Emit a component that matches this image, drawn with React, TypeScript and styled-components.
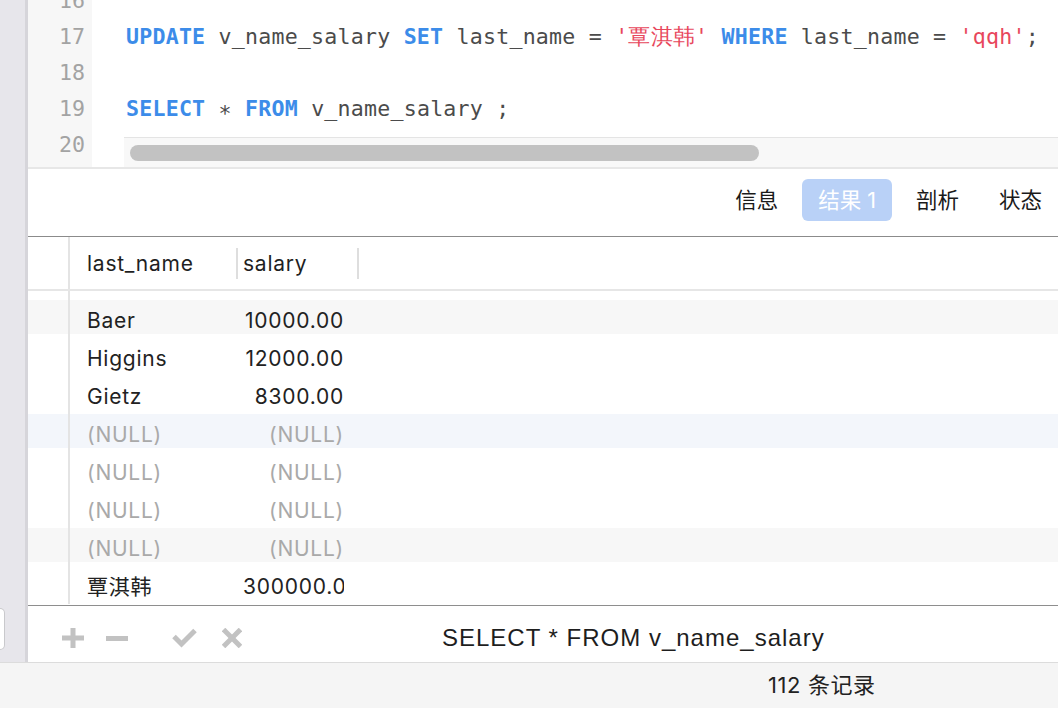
import React from "react";
import styled, { createGlobalStyle } from "styled-components";

const Global = createGlobalStyle`
  html, body { margin: 0; padding: 0; background: #fff; overflow: hidden; }
  #root { width: 1058px; height: 708px; }
`;

const Shell = styled.div`
  width: 1058px;
  height: 708px;
  display: flex;
  flex-direction: column;
  overflow: hidden;
  font-family: Inter, "Noto Sans CJK SC", sans-serif;
  color: #1e1e1e;
`;

const Main = styled.div`
  display: flex;
  height: 663px;
  box-sizing: border-box;
  border-bottom: 1px solid #dcdcdc;
`;

const Sidebar = styled.div`
  width: 25px;
  flex: none;
  background: #e7e6eb;
  border-right: 3px solid #d6d5da;
  display: flex;
  flex-direction: column;
  justify-content: flex-end;
  padding-bottom: 12px;
  box-sizing: content-box;
`;

const SideHandle = styled.div`
  width: 4px;
  height: 40px;
  background: #fff;
  border: 1px solid #c9c9cc;
  border-left: none;
  border-radius: 0 6px 6px 0;
`;

const Content = styled.div`
  flex: 1;
  display: flex;
  flex-direction: column;
  min-width: 0;
`;

const Editor = styled.div`
  height: 167px;
  flex: none;
  display: flex;
  position: relative;
  overflow: hidden;
  border-bottom: 2px solid #e7e7e7;
  font-family: "DejaVu Sans Mono", monospace;
  font-size: 21.6px;
`;

const Gutter = styled.div`
  width: 64px;
  flex: none;
  background: #f7f7f7;
  color: #a3a3a3;
  text-align: right;
  padding-right: 7px;
  box-sizing: border-box;
`;

const Lines = styled.div`
  margin-top: -17px;
`;

const Line = styled.div`
  height: 36px;
  line-height: 36px;
  white-space: pre;
`;

const CodeArea = styled.div`
  flex: 1;
  padding-left: 34px;
  color: #4b4b4b;
  letter-spacing: 0.22px;
`;

const Kw = styled.span`
  color: #3c8ce9;
  font-weight: bold;
`;

const Str = styled.span`
  color: #e8475c;
`;

const Star = styled.span`
  display: inline-block;
  transform: translateY(5px);
`;

const ScrollTrack = styled.div`
  position: absolute;
  left: 96px;
  right: 0;
  bottom: 0;
  height: 30px;
  box-sizing: border-box;
  background: #f8f8f8;
  border-top: 1px solid #e4e4e4;
  padding: 7px 0 0 6px;
`;

const ScrollThumb = styled.div`
  width: 629px;
  height: 16px;
  border-radius: 8px;
  background: #c2c2c2;
`;

const TabBar = styled.div`
  height: 68px;
  flex: none;
  box-sizing: border-box;
  border-bottom: 1px solid #8b8b8b;
  display: flex;
  justify-content: flex-end;
  align-items: flex-start;
  gap: 8px;
  padding-top: 10px;
`;

const Tab = styled.div<{ $active?: boolean }>`
  height: 42px;
  line-height: 42px;
  padding: 0 16px;
  border-radius: 6px;
  font-size: 21.5px;
  background: ${(p) => (p.$active ? "#b9d1f7" : "transparent")};
  color: ${(p) => (p.$active ? "#ffffff" : "#1a1a1a")};
`;

const Table = styled.div`
  flex: 1;
  display: flex;
  flex-direction: column;
  border-bottom: 1px solid #8e8e8e;
  overflow: hidden;
  font-size: 21px;
  letter-spacing: 0.75px;
`;

const HeaderRow = styled.div`
  height: 54px;
  flex: none;
  display: flex;
  align-items: stretch;
  box-sizing: border-box;
  border-bottom: 2px solid #e6e6e6;
`;

const NumCell = styled.div`
  width: 40px;
  flex: none;
  border-right: 2px solid #e4e4e4;
`;

const HeadCell = styled.div<{ $w: number; $pl: number }>`
  width: ${(p) => p.$w}px;
  padding-left: ${(p) => p.$pl}px;
  box-sizing: border-box;
  display: flex;
  align-items: center;
  color: #1f1f1f;
`;

const ColDivider = styled.div`
  width: 2px;
  height: 31px;
  align-self: center;
  background: #dedede;
`;

const Spacer = styled.div`
  height: 9px;
  flex: none;
  display: flex;
`;

const Row = styled.div<{ $bg?: string }>`
  height: 38px;
  flex: none;
  display: flex;
  background: ${(p) =>
    p.$bg ? `linear-gradient(to bottom, ${p.$bg} 0 34px, transparent 34px)` : "transparent"};
`;

const NameCell = styled.div<{ $null?: boolean }>`
  width: 166px;
  padding: 4px 0 0 17px;
  box-sizing: border-box;
  line-height: 34px;
  white-space: nowrap;
  color: ${(p) => (p.$null ? "#a9a9a9" : "#222")};
`;

const SalaryCell = styled.div<{ $null?: boolean }>`
  width: 101px;
  margin-left: 7px;
  padding-top: 4px;
  line-height: 34px;
  text-align: right;
  white-space: nowrap;
  overflow: hidden;
  color: ${(p) => (p.$null ? "#a9a9a9" : "#222")};
`;

const Toolbar = styled.div`
  height: 56px;
  flex: none;
  display: flex;
  align-items: center;
  padding: 7px 0 0 34px;
  box-sizing: border-box;
`;

const IconSlot = styled.div<{ $ml: number }>`
  margin-left: ${(p) => p.$ml}px;
  display: flex;
  align-items: center;
  color: #c2c2c2;
`;

const SqlText = styled.div`
  margin-left: 200px;
  font-family: "Liberation Sans", Arial, sans-serif;
  font-size: 24px;
  letter-spacing: 1px;
  color: #1e1e1e;
  white-space: nowrap;
`;

const StatusBar = styled.div`
  height: 45px;
  flex: none;
  background: #f5f5f5;
  padding-left: 768px;
  line-height: 45px;
  font-size: 22px;
  letter-spacing: 0.6px;
  color: #222;
`;

type DataRow = { name: string; salary: string; bg?: string };

const rows: DataRow[] = [
  { name: "Baer", salary: "10000.00", bg: "#f7f7f7" },
  { name: "Higgins", salary: "12000.00" },
  { name: "Gietz", salary: "8300.00" },
  { name: "(NULL)", salary: "(NULL)", bg: "#f3f6fb" },
  { name: "(NULL)", salary: "(NULL)" },
  { name: "(NULL)", salary: "(NULL)" },
  { name: "(NULL)", salary: "(NULL)", bg: "#f7f7f7" },
  { name: "覃淇韩", salary: "300000.00" },
];

const PlusIcon = () => (
  <svg width="22" height="20" viewBox="0 0 22 20" fill="currentColor">
    <path d="M8.5 0h5v7.5h8.5v5h-8.5v7.5h-5v-7.5H0v-5h8.5z" />
  </svg>
);

const MinusIcon = () => (
  <svg width="22" height="20" viewBox="0 0 22 20" fill="currentColor">
    <rect x="0" y="8" width="22" height="5" />
  </svg>
);

const CheckIcon = () => (
  <svg width="25" height="20" viewBox="0 0 25 20" fill="none" stroke="currentColor" strokeWidth="5">
    <polyline points="2,8.5 9.5,16 23,2.5" />
  </svg>
);

const CrossIcon = () => (
  <svg width="20" height="20" viewBox="0 0 20 20" fill="none" stroke="currentColor" strokeWidth="5">
    <line x1="1.5" y1="1.5" x2="18.5" y2="18.5" />
    <line x1="18.5" y1="1.5" x2="1.5" y2="18.5" />
  </svg>
);

export default function App() {
  return (
    <Shell>
      <Global />
      <Main>
        <Sidebar>
          <SideHandle />
        </Sidebar>
        <Content>
          <Editor>
            <Gutter>
              <Lines>
                {[16, 17, 18, 19, 20].map((n) => (
                  <Line key={n}>{n}</Line>
                ))}
              </Lines>
            </Gutter>
            <CodeArea>
              <Lines>
                <Line> </Line>
                <Line>
                  <Kw>UPDATE</Kw> v_name_salary <Kw>SET</Kw> last_name = <Str>'覃淇韩'</Str>{" "}
                  <Kw>WHERE</Kw> last_name = <Str>'qqh'</Str>;
                </Line>
                <Line> </Line>
                <Line>
                  <Kw>SELECT</Kw> <Star>*</Star> <Kw>FROM</Kw> v_name_salary ;
                </Line>
                <Line> </Line>
              </Lines>
            </CodeArea>
            <ScrollTrack>
              <ScrollThumb />
            </ScrollTrack>
          </Editor>
          <TabBar>
            <Tab>信息</Tab>
            <Tab $active>结果 1</Tab>
            <Tab>剖析</Tab>
            <Tab>状态</Tab>
          </TabBar>
          <Table>
            <HeaderRow>
              <NumCell />
              <HeadCell $w={166} $pl={17}>last_name</HeadCell>
              <ColDivider />
              <HeadCell $w={119} $pl={5}>salary</HeadCell>
              <ColDivider />
            </HeaderRow>
            <Spacer>
              <NumCell />
            </Spacer>
            {rows.map((r, i) => (
              <Row key={i} $bg={r.bg}>
                <NumCell />
                <NameCell $null={r.name === "(NULL)"}>{r.name}</NameCell>
                <SalaryCell $null={r.salary === "(NULL)"}>{r.salary}</SalaryCell>
              </Row>
            ))}
          </Table>
          <Toolbar>
            <IconSlot $ml={0}>
              <PlusIcon />
            </IconSlot>
            <IconSlot $ml={22}>
              <MinusIcon />
            </IconSlot>
            <IconSlot $ml={44}>
              <CheckIcon />
            </IconSlot>
            <IconSlot $ml={25}>
              <CrossIcon />
            </IconSlot>
            <SqlText>SELECT * FROM v_name_salary</SqlText>
          </Toolbar>
        </Content>
      </Main>
      <StatusBar>112 条记录</StatusBar>
    </Shell>
  );
}
